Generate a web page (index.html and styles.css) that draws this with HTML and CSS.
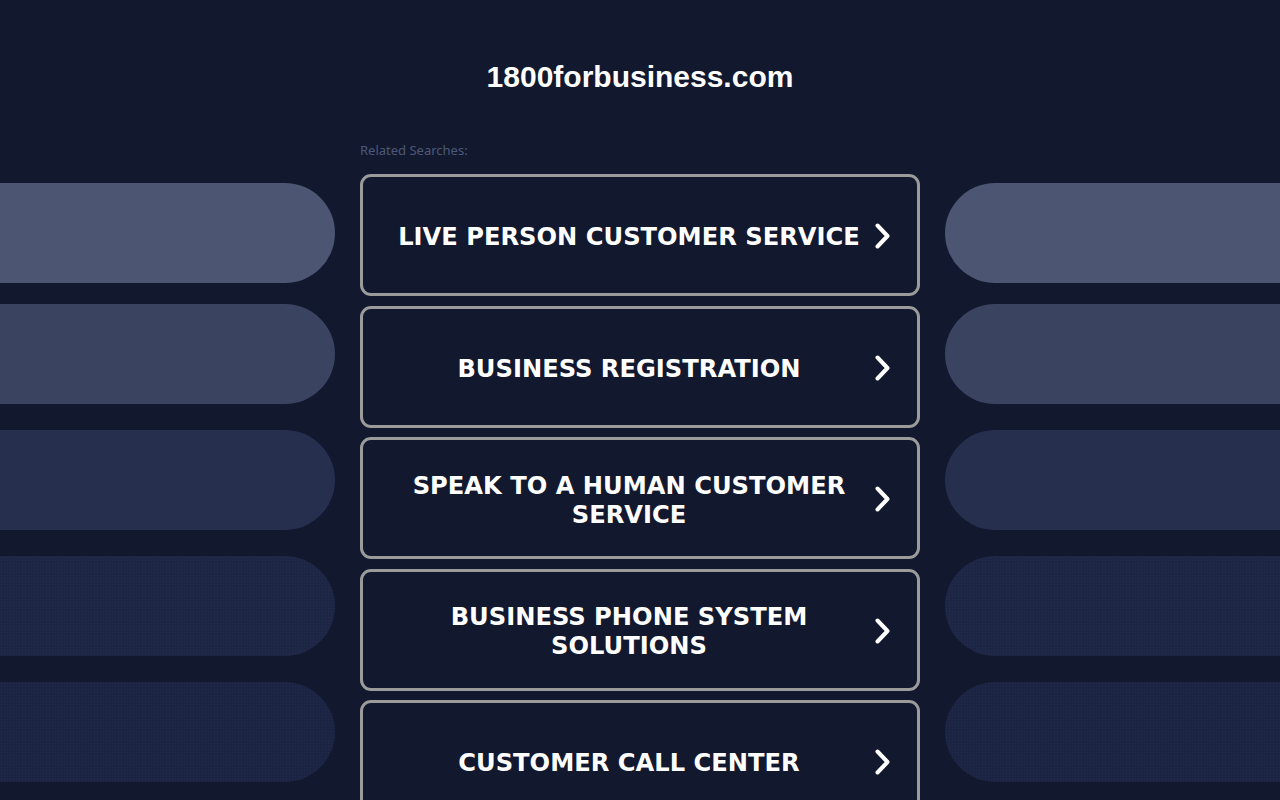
FILE: index.html
```html
<!DOCTYPE html>
<html lang="en">
<head>
<meta charset="utf-8">
<title>1800forbusiness.com</title>
<link rel="stylesheet" href="styles.css">
</head>
<body>
<div class="page">
  <aside class="side side-left">
    <div class="pill p1"></div>
    <div class="pill p2"></div>
    <div class="pill p3"></div>
    <div class="pill p4"></div>
    <div class="pill p5"></div>
  </aside>
  <main class="center">
    <h1 class="domain">1800forbusiness.com</h1>
    <div class="related">Related Searches:</div>
    <div class="links">
      <a class="link" href="#"><span class="label">LIVE PERSON CUSTOMER SERVICE</span><svg class="chev" viewBox="0 0 16 26" width="16" height="26"><polyline points="2.5,2.5 12.5,13 2.5,23.5"/></svg></a>
      <a class="link" href="#"><span class="label">BUSINESS REGISTRATION</span><svg class="chev" viewBox="0 0 16 26" width="16" height="26"><polyline points="2.5,2.5 12.5,13 2.5,23.5"/></svg></a>
      <a class="link" href="#"><span class="label">SPEAK TO A HUMAN CUSTOMER SERVICE</span><svg class="chev" viewBox="0 0 16 26" width="16" height="26"><polyline points="2.5,2.5 12.5,13 2.5,23.5"/></svg></a>
      <a class="link" href="#"><span class="label">BUSINESS PHONE SYSTEM SOLUTIONS</span><svg class="chev" viewBox="0 0 16 26" width="16" height="26"><polyline points="2.5,2.5 12.5,13 2.5,23.5"/></svg></a>
      <a class="link" href="#"><span class="label">CUSTOMER CALL CENTER</span><svg class="chev" viewBox="0 0 16 26" width="16" height="26"><polyline points="2.5,2.5 12.5,13 2.5,23.5"/></svg></a>
    </div>
  </main>
  <aside class="side side-right">
    <div class="pill p1"></div>
    <div class="pill p2"></div>
    <div class="pill p3"></div>
    <div class="pill p4"></div>
    <div class="pill p5"></div>
  </aside>
</div>
</body>
</html>
```

FILE: styles.css
```css
html, body {
  margin: 0;
  padding: 0;
  background: #12182e;
  height: 100%;
  overflow: hidden;
}

.page {
  display: grid;
  grid-template-columns: 1fr 560px 1fr;
  column-gap: 25px;
  min-height: 800px;
}

.side {
  display: flex;
  flex-direction: column;
  padding-top: 183px;
}

.pill {
  height: 100px;
  flex: none;
}

.pill + .pill { margin-top: 26px; }
.pill.p2 { margin-top: 21px; }

.side-left .pill { border-radius: 0 50px 50px 0; }
.side-right .pill { border-radius: 50px 0 0 50px; }

.p1 { background: #4c5672; }
.p2 { background: #3a4461; }
.p3 { background: #262f4e; }
.p4 {
  background-color: #1e2646;
  background-image: radial-gradient(rgba(255,255,255,0.035) 0.6px, transparent 0.8px);
  background-size: 3px 3px;
}
.p5 {
  background-color: #1c2443;
  background-image: radial-gradient(rgba(255,255,255,0.035) 0.6px, transparent 0.8px);
  background-size: 3px 3px;
}

.center {
  display: flex;
  flex-direction: column;
}

.domain {
  margin: 0;
  padding-top: 59px;
  height: 36px;
  line-height: 36px;
  text-align: center;
  font-family: "Liberation Sans", Arial, sans-serif;
  font-weight: bold;
  font-size: 30px;
  color: #ffffff;
}

.related {
  margin-top: 47px;
  height: 16px;
  line-height: 16px;
  font-family: "Noto Sans", "Open Sans", sans-serif;
  font-size: 13px;
  color: #4d5878;
}

.links {
  margin-top: 16px;
  display: flex;
  flex-direction: column;
  gap: 9.5px;
}

.link {
  position: relative;
  display: flex;
  align-items: center;
  justify-content: center;
  box-sizing: border-box;
  height: 122px;
  padding: 5px 52px 0 30px;
  border: 3px solid #9b9b9b;
  border-radius: 11px;
  text-decoration: none;
  background: #12182e;
}

.label {
  font-family: "DejaVu Sans", Verdana, sans-serif;
  font-weight: bold;
  font-size: 24.2px;
  line-height: 29px;
  color: #ffffff;
  text-align: center;
}

.chev {
  position: absolute;
  right: 26px;
  top: 50%;
  margin-top: -12px;
}

.chev polyline {
  fill: none;
  stroke: #ffffff;
  stroke-width: 4;
  stroke-linecap: round;
  stroke-linejoin: round;
}
```
